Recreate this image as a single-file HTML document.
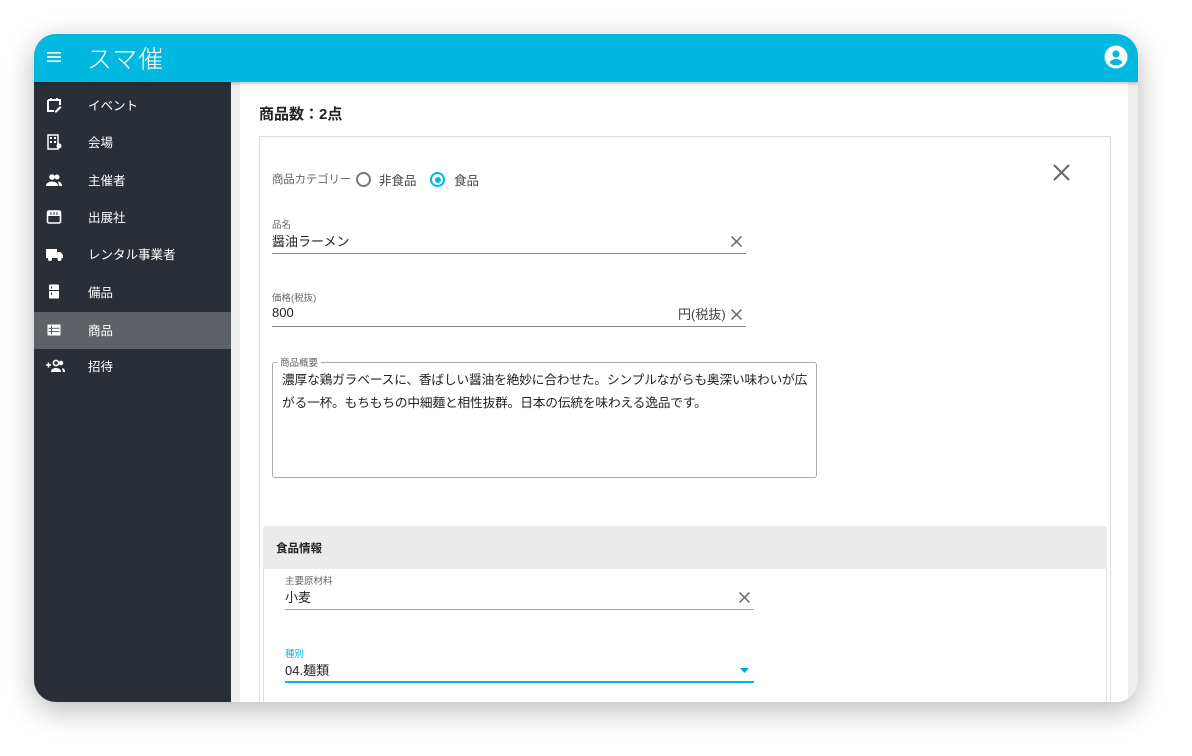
<!DOCTYPE html>
<html><head><meta charset="utf-8"><style>
*{margin:0;padding:0;box-sizing:border-box}
body{width:1192px;height:756px;background:#fff;font-family:"Liberation Sans","Noto Sans CJK JP",sans-serif;position:relative;overflow:hidden;color:#222}
.frame{position:absolute;left:34px;top:34px;width:1104px;height:668px;border-radius:22px;overflow:hidden;background:#eee;box-shadow:0 8px 30px rgba(0,0,0,.28)}
.hdr{position:absolute;left:0;top:0;width:1104px;height:48px;background:#00b8e0;box-shadow:0 2px 3px rgba(0,0,0,.2);z-index:2}
.side{position:absolute;left:0;top:48px;width:197px;height:620px;background:#2a2f37}
.item{position:absolute;left:0;width:197px;height:37px;color:#fff;font-size:12.5px}
.item span{position:absolute;left:54px;top:8px}
.item svg{position:absolute;left:12px;top:10px}
.item.sel{background:#5e6266}
.main{position:absolute;left:206px;top:48px;width:888px;height:620px;background:#fff}
.abs{position:absolute}
.lbl{font-size:9.5px;color:#666}
.val{font-size:13px;color:#222}
.line{position:absolute;height:1px;background:#8a8a8a}
</style></head><body>
<div class="frame">
 <div class="hdr">
  <svg class="abs" style="left:13px;top:18px" width="14" height="10"><rect y="0" width="14" height="1.6" fill="#fff"/><rect y="4.2" width="14" height="1.6" fill="#fff"/><rect y="8.4" width="14" height="1.6" fill="#fff"/></svg>
  <div class="abs" style="left:53px;top:6px;color:#fff;font-size:25px;letter-spacing:1px;font-family:'Noto Sans CJK JP',sans-serif;font-weight:300">スマ催</div>
  <svg class="abs" style="left:1070px;top:11px" width="24" height="24" viewBox="0 0 24 24"><circle cx="12" cy="12" r="11.5" fill="#fff"/><circle cx="12" cy="9" r="3.6" fill="#00b8e0"/><path d="M5.5 17.5c1.5-2.5 4-3.5 6.5-3.5s5 1 6.5 3.5c-1.6 1.8-4 2.9-6.5 2.9s-4.9-1.1-6.5-2.9z" fill="#00b8e0"/></svg>
 </div>
 <div class="side">
  <div class="item" style="top:5px"><svg width="16" height="16" viewBox="0 0 16 16"><path d="M2 3h12v5M2 3v11h6" stroke="#fff" stroke-width="2" fill="none"/><rect x="4" y="1" width="2" height="3" fill="#fff"/><rect x="10" y="1" width="2" height="3" fill="#fff"/><path d="M9 14l5-5 1.5 1.5-5 5H9z" fill="#fff"/></svg><span>イベント</span></div>
  <div class="item" style="top:42px"><svg width="16" height="16" viewBox="0 0 16 16"><rect x="2" y="1" width="10" height="14" stroke="#fff" stroke-width="1.5" fill="none"/><g fill="#fff"><rect x="4" y="3" width="2" height="2"/><rect x="8" y="3" width="2" height="2"/><rect x="4" y="7" width="2" height="2"/><rect x="8" y="7" width="2" height="2"/></g><circle cx="13" cy="12" r="2.5" fill="#fff"/></svg><span>会場</span></div>
  <div class="item" style="top:80px"><svg width="16" height="16" viewBox="0 0 16 16"><circle cx="6" cy="5" r="2.8" fill="#fff"/><circle cx="11" cy="5" r="2.5" fill="#fff"/><path d="M0 14c0-3 3-4.5 6-4.5s6 1.5 6 4.5z" fill="#fff"/><path d="M12 9.5c2 .3 4 1.5 4 4.5h-3z" fill="#fff"/></svg><span>主催者</span></div>
  <div class="item" style="top:117px"><svg width="16" height="16" viewBox="0 0 16 16"><rect x="1.5" y="2" width="13" height="12" rx="1.5" stroke="#fff" stroke-width="1.6" fill="none"/><rect x="1.5" y="2" width="13" height="5" fill="#fff"/><g fill="#2a2f37"><rect x="4.5" y="3" width="1" height="3"/><rect x="7.5" y="3" width="1" height="3"/><rect x="10.5" y="3" width="1" height="3"/></g></svg><span>出展社</span></div>
  <div class="item" style="top:154px"><svg width="18" height="16" viewBox="0 0 18 16"><rect x="0" y="3" width="11" height="9" fill="#fff"/><path d="M11 6h3.5l2.5 3v3h-6z" fill="#fff"/><circle cx="4" cy="13" r="2" fill="#fff"/><circle cx="13.5" cy="13" r="2" fill="#fff"/></svg><span>レンタル事業者</span></div>
  <div class="item" style="top:192px"><svg width="16" height="16" viewBox="0 0 16 16"><rect x="3" y="0.5" width="10" height="14" rx="1" fill="#fff"/><rect x="3" y="6" width="10" height="1" fill="#2a2f37"/><rect x="5" y="2.5" width="1" height="2" fill="#2a2f37"/><rect x="5" y="8.5" width="1" height="2.5" fill="#2a2f37"/></svg><span>備品</span></div>
  <div class="item sel" style="top:230px"><svg width="16" height="16" viewBox="0 0 16 16"><rect x="1.5" y="2.5" width="13" height="11" fill="#fff"/><g fill="#5e6266"><rect x="5" y="3.5" width="1" height="9"/><rect x="2.5" y="5.8" width="11" height="1"/><rect x="2.5" y="9" width="11" height="1"/></g></svg><span>商品</span></div>
  <div class="item" style="top:266px"><svg width="20" height="16" viewBox="0 0 20 16"><path d="M0 7h5M2.5 4.5v5" stroke="#fff" stroke-width="1.6"/><circle cx="10" cy="5" r="2.6" stroke="#fff" stroke-width="1.6" fill="none"/><path d="M5 14c0-3 2.5-4 5-4s5 1 5 4z" fill="#fff"/><circle cx="15" cy="5" r="2.3" fill="#fff"/><path d="M16 10c2 .5 3 1.5 3 4h-2z" fill="#fff"/></svg><span>招待</span></div>
 </div>
 <div class="main">
  <div class="abs" style="left:19px;top:21px;font-size:15px;font-weight:bold;color:#222">商品数：2点</div>
  <div class="abs" style="left:19px;top:54px;width:852px;height:580px;border:1px solid #ddd"></div>
  <div class="abs" style="left:32px;top:89px;font-size:11.5px;color:#666;letter-spacing:-0.2px">商品カテゴリー</div>
  <div class="abs" style="left:116px;top:90px;width:15px;height:15px;border:2px solid #777;border-radius:50%"></div>
  <div class="abs" style="left:139px;top:88px;font-size:12.5px;color:#444">非食品</div>
  <div class="abs" style="left:190px;top:90px;width:15px;height:15px;border:2px solid #00b8e0;border-radius:50%"><div style="margin:2.5px;width:6px;height:6px;border-radius:50%;background:#00b8e0"></div></div>
  <div class="abs" style="left:214px;top:88px;font-size:12.5px;color:#444">食品</div>
  <svg class="abs" style="left:813px;top:82px" width="17" height="17"><path d="M1 1l15 15M16 1L1 16" stroke="#666" stroke-width="2"/></svg>

  <div class="abs lbl" style="left:32px;top:135px">品名</div>
  <div class="abs val" style="left:32px;top:149px">醤油ラーメン</div>
  <svg class="abs" style="left:491px;top:154px" width="11" height="11"><path d="M0.5 0.5l10 10M10.5 0.5l-10 10" stroke="#666" stroke-width="1.5"/></svg>
  <div class="line" style="left:32px;top:171px;width:474px"></div>

  <div class="abs lbl" style="left:32px;top:208px">価格(税抜)</div>
  <div class="abs val" style="left:32px;top:223px">800</div>
  <div class="abs val" style="left:438px;top:222px;color:#444">円(税抜)</div>
  <svg class="abs" style="left:491px;top:227px" width="11" height="11"><path d="M0.5 0.5l10 10M10.5 0.5l-10 10" stroke="#666" stroke-width="1.5"/></svg>
  <div class="line" style="left:32px;top:244px;width:474px"></div>

  <div class="abs" style="left:32px;top:280px;width:545px;height:116px;border:1px solid #aaa;border-radius:3px"></div>
  <div class="abs lbl" style="left:37px;top:273px;background:#fff;padding:0 3px">商品概要</div>
  <div class="abs" style="left:42px;top:287px;width:536px;font-size:12.7px;line-height:23px;color:#222;letter-spacing:-0.15px">濃厚な鶏ガラベースに、香ばしい醤油を絶妙に合わせた。シンプルながらも奥深い味わいが広がる一杯。もちもちの中細麺と相性抜群。日本の伝統を味わえる逸品です。</div>

  <div class="abs" style="left:23px;top:444px;width:844px;height:43px;background:#ebebeb;border-radius:3px 3px 0 0"></div>
  <div class="abs" style="left:36px;top:458px;font-size:11.5px;font-weight:bold;color:#222">食品情報</div>
  <div class="abs" style="left:23px;top:487px;width:844px;height:140px;border:1px solid #ddd;border-top:none"></div>

  <div class="abs lbl" style="left:45px;top:491px">主要原材料</div>
  <div class="abs val" style="left:45px;top:505px">小麦</div>
  <svg class="abs" style="left:499px;top:510px" width="11" height="11"><path d="M0.5 0.5l10 10M10.5 0.5l-10 10" stroke="#666" stroke-width="1.5"/></svg>
  <div class="line" style="left:45px;top:527px;width:469px;background:#aaa"></div>

  <div class="abs lbl" style="left:45px;top:564px;color:#00b8e0">種別</div>
  <div class="abs val" style="left:45px;top:578px">04.麺類</div>
  <svg class="abs" style="left:500px;top:586px" width="9" height="5"><path d="M0 0h9L4.5 5z" fill="#00a8d8"/></svg>
  <div class="line" style="left:45px;top:599px;width:469px;height:2px;background:#00b8e0"></div>
 </div>
</div>
</body></html>
